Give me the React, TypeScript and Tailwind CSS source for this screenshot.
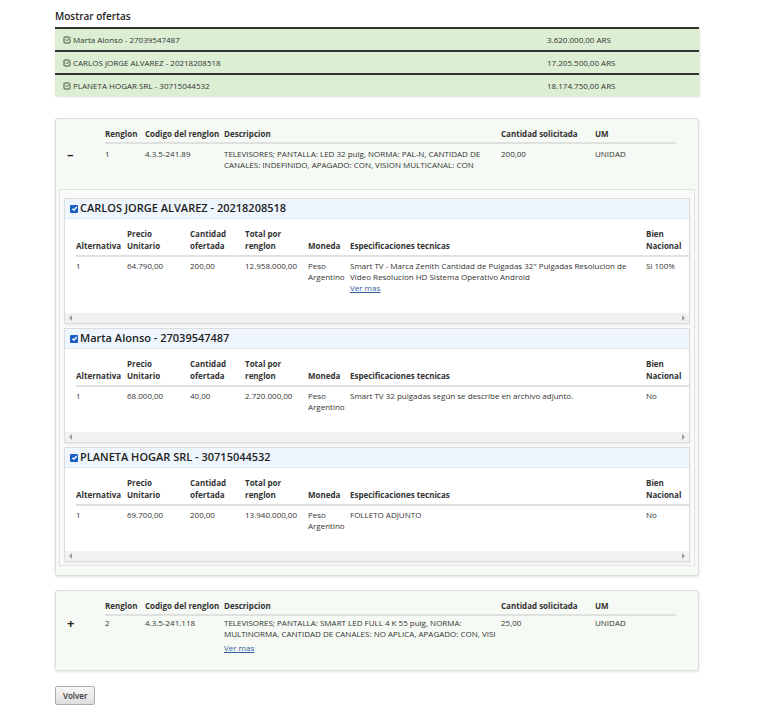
import { SquareCheckBig } from 'lucide-react';

const offers = [
  { name: 'Marta Alonso - 27039547487', amount: '3.620.000,00 ARS' },
  { name: 'CARLOS JORGE ALVAREZ - 20218208518', amount: '17.205.500,00 ARS' },
  { name: 'PLANETA HOGAR SRL - 30715044532', amount: '18.174.750,00 ARS' },
];

const proposals = [
  {
    title: 'CARLOS JORGE ALVAREZ - 20218208518',
    precio: '64.790,00',
    cantidad: '200,00',
    total: '12.958.000,00',
    spec: [
      'Smart TV - Marca Zenith Cantidad de Pulgadas 32" Pulgadas Resolucion de',
      'Video Resolucion HD Sistema Operativo Android',
    ],
    verMas: true,
    bien: 'Si 100%',
  },
  {
    title: 'Marta Alonso - 27039547487',
    precio: '68.000,00',
    cantidad: '40,00',
    total: '2.720.000,00',
    spec: ['Smart TV 32 pulgadas según se describe en archivo adjunto.'],
    verMas: false,
    bien: 'No',
  },
  {
    title: 'PLANETA HOGAR SRL - 30715044532',
    precio: '69.700,00',
    cantidad: '200,00',
    total: '13.940.000,00',
    spec: ['FOLLETO ADJUNTO'],
    verMas: false,
    bien: 'No',
  },
];

function VerMas() {
  return <a className="block text-[#2d5c9e] underline">Ver mas</a>;
}

function Lines({ lines }: { lines: string[] }) {
  return (
    <>
      {lines.map((l) => (
        <span key={l} className="block whitespace-nowrap">
          {l}
        </span>
      ))}
    </>
  );
}

function Scrollbar() {
  return (
    <div className="flex h-[10px] items-center justify-between bg-[#f1f1f1] px-[4px]">
      <span className="h-0 w-0 border-y-[3px] border-r-[3px] border-y-transparent border-r-[#9c9c9c]" />
      <span className="h-0 w-0 border-y-[3px] border-l-[3px] border-y-transparent border-l-[#9c9c9c]" />
    </div>
  );
}

function Checkbox() {
  return (
    <span className="flex h-[8px] w-[8px] items-center justify-center rounded-[1px] bg-[#1b5fc4]">
      <svg viewBox="0 0 10 10" className="h-[7px] w-[7px]" fill="none" stroke="white" strokeWidth="2">
        <path d="M2 5.2 4.2 7.3 8.2 2.8" />
      </svg>
    </span>
  );
}

type Proposal = (typeof proposals)[number];

function ProposalPanel({ p }: { p: Proposal }) {
  return (
    <div className="border border-[#dcdcdc] bg-white shadow-[0_1px_2px_rgba(0,0,0,0.08)]">
      <div className="flex h-[20px] items-center gap-[2px] border-b border-[#dfe8f0] bg-[#eef5fc] px-[5px]">
        <Checkbox />
        <span className="text-[11px] font-semibold text-[#222]">{p.title}</span>
      </div>
      <div className="pl-[11px] pt-[9px]">
        <div className="grid grid-cols-[51px_63px_55px_63px_42px_296px_38px] items-end border-b-2 border-[#e0e0e0] pb-[3px] font-bold leading-[12px]">
          <span>Alternativa</span>
          <span>
            Precio
            <br />
            Unitario
          </span>
          <span>
            Cantidad
            <br />
            ofertada
          </span>
          <span>
            Total por
            <br />
            renglon
          </span>
          <span>Moneda</span>
          <span>Especificaciones tecnicas</span>
          <span className="whitespace-nowrap">
            Bien
            <br />
            Nacional
          </span>
        </div>
        <div className="grid grid-cols-[51px_63px_55px_63px_42px_296px_38px] items-start pb-[20px] pt-[3px] leading-[11px]">
          <span>1</span>
          <span>{p.precio}</span>
          <span>{p.cantidad}</span>
          <span>{p.total}</span>
          <span>
            Peso
            <br />
            Argentino
          </span>
          <span>
            <Lines lines={p.spec} />
            {p.verMas && <VerMas />}
          </span>
          <span className="whitespace-nowrap">{p.bien}</span>
        </div>
      </div>
      <Scrollbar />
    </div>
  );
}

function RenglonHeader({
  sign,
  renglon,
  codigo,
  desc,
  verMas,
  cantidad,
  dataPad,
}: {
  sign: string;
  renglon: string;
  codigo: string;
  desc: string[];
  verMas: boolean;
  cantidad: string;
  dataPad: string;
}) {
  return (
    <div className="flex pt-[9px]">
      <div className="flex w-[49px] shrink-0 flex-col">
        <div className="h-[16px]" />
        <div className={`${dataPad} pl-[11px] text-[13px] font-bold leading-[12px] text-[#222]`}>{sign}</div>
      </div>
      <div className="w-[571px]">
        <div className="grid grid-cols-[40px_79px_277px_94px_81px] border-b-2 border-[#e0e0e0] pb-[3px] font-bold leading-[11px]">
          <span>Renglon</span>
          <span className="whitespace-nowrap">Codigo del renglon</span>
          <span>Descripcion</span>
          <span>Cantidad solicitada</span>
          <span>UM</span>
        </div>
        <div className={`grid grid-cols-[40px_79px_277px_94px_81px] ${dataPad} leading-[11px]`}>
          <span>{renglon}</span>
          <span>{codigo}</span>
          <span>
            <Lines lines={desc} />
            {verMas && (
              <span className="block pt-[3px]">
                <VerMas />
              </span>
            )}
          </span>
          <span>{cantidad}</span>
          <span>UNIDAD</span>
        </div>
      </div>
    </div>
  );
}

export default function App() {
  return (
    <div
      className="min-h-[712px] bg-white text-[8px] text-[#333]"
      style={{ fontFamily: '"Open Sans", "Liberation Sans", sans-serif' }}
    >
      <div className="ml-[55px] w-[644px] pt-[9px]">
        <h2 className="text-[10px] font-semibold leading-[14px] text-[#222]">Mostrar ofertas</h2>

        {/* Resumen de ofertas */}
        <div className="mt-[4px] shadow-[1px_1px_2px_rgba(0,0,0,0.15)]">
          {offers.map((o) => (
            <div key={o.name} className="flex h-[23px] items-center border-t-2 border-[#333] bg-[#dceed4]">
              <div className="flex w-[492px] items-center gap-[2px] pl-[8px]">
                <SquareCheckBig className="h-[8px] w-[8px] text-[#3f513f]" strokeWidth={3} />
                <span>{o.name}</span>
              </div>
              <span>{o.amount}</span>
            </div>
          ))}
        </div>

        {/* Renglon 1 */}
        <div className="mt-[22px] rounded-[3px] border border-[#dedede] bg-[#f5faf4] shadow-[0_1px_3px_rgba(0,0,0,0.12)]">
          <div className="pb-[19px]">
            <RenglonHeader
              sign="–"
              renglon="1"
              codigo="4.3.5-241.89"
              desc={[
                'TELEVISORES; PANTALLA: LED 32 pulg, NORMA: PAL-N, CANTIDAD DE',
                'CANALES: INDEFINIDO, APAGADO: CON, VISION MULTICANAL: CON',
              ]}
              verMas={false}
              cantidad="200,00"
              dataPad="pt-[4px]"
            />
          </div>
          <div className="mx-[3px] mb-[9px] flex flex-col gap-[4px] border border-[#e2e2e2] bg-[#fafafa] px-[4px] pb-[3px] pt-[8px]">
            {proposals.map((p) => (
              <ProposalPanel key={p.title} p={p} />
            ))}
          </div>
        </div>

        {/* Renglon 2 */}
        <div className="mt-[14px] rounded-[3px] border border-[#dedede] bg-[#f5faf4] pb-[17px] shadow-[0_1px_3px_rgba(0,0,0,0.12)]">
          <RenglonHeader
            sign="+"
            renglon="2"
            codigo="4.3.5-241.118"
            desc={[
              'TELEVISORES; PANTALLA: SMART LED FULL 4 K 55 pulg, NORMA:',
              'MULTINORMA, CANTIDAD DE CANALES: NO APLICA, APAGADO: CON, VISI',
            ]}
            verMas
            cantidad="25,00"
            dataPad="pt-[1px]"
          />
        </div>

        <button
          type="button"
          className="mt-[15px] h-[19px] rounded-[2px] border border-[#adadad] bg-gradient-to-b from-[#f7f7f7] to-[#dedede] px-[7px] text-[8px] font-semibold text-[#333]"
        >
          Volver
        </button>
      </div>
    </div>
  );
}
